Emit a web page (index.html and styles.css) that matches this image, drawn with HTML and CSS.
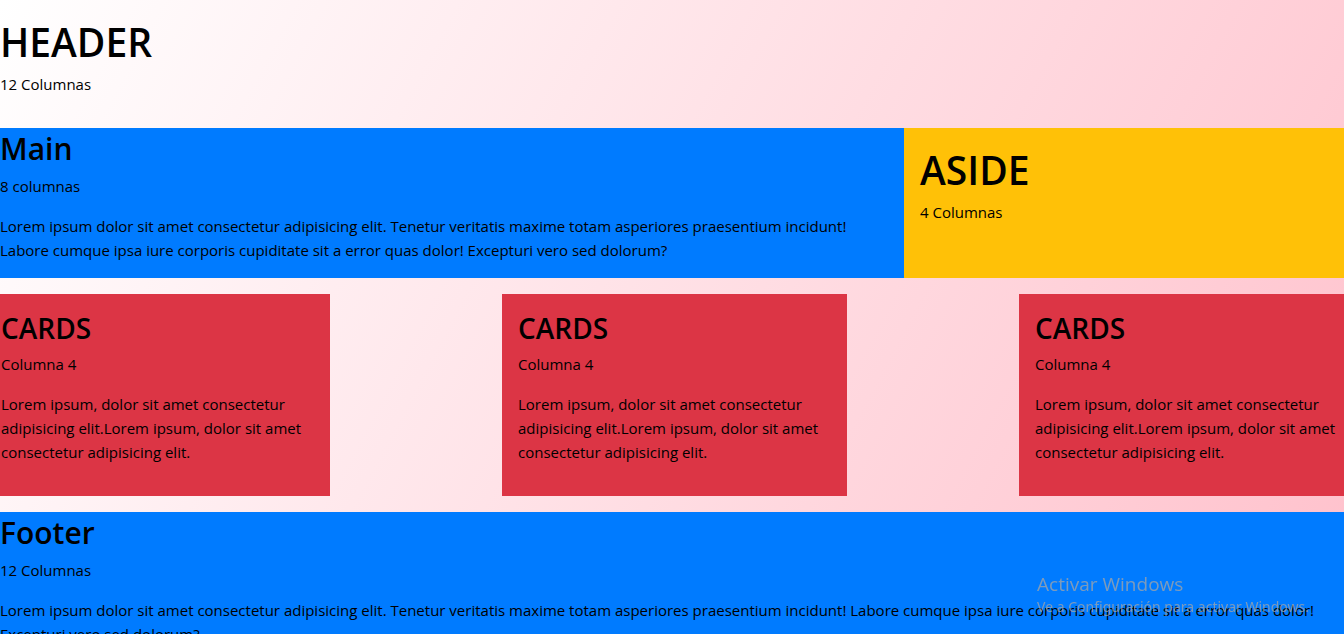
FILE: index.html
```html
<!DOCTYPE html>
<html lang="es">
<head>
<meta charset="utf-8">
<meta name="viewport" content="width=device-width, initial-scale=1">
<title>Grid de 12 columnas</title>
<link rel="stylesheet" href="styles.css">
</head>
<body>
<header class="header">
  <h1 class="title-xl">HEADER</h1>
  <p>12 Columnas</p>
</header>
<div class="content">
  <main class="main">
    <h2 class="title-lg">Main</h2>
    <p>8 columnas</p>
    <p>Lorem ipsum dolor sit amet consectetur adipisicing elit. Tenetur veritatis maxime totam asperiores praesentium incidunt! Labore cumque ipsa iure corporis cupiditate sit a error quas dolor! Excepturi vero sed dolorum?</p>
  </main>
  <aside class="aside">
    <h2 class="title-xl">ASIDE</h2>
    <p>4 Columnas</p>
  </aside>
</div>
<section class="cards">
  <article class="card card-first">
    <h3 class="title-md">CARDS</h3>
    <p>Columna 4</p>
    <p>Lorem ipsum, dolor sit amet consectetur adipisicing elit.Lorem ipsum, dolor sit amet consectetur adipisicing elit.</p>
  </article>
  <article class="card">
    <h3 class="title-md">CARDS</h3>
    <p>Columna 4</p>
    <p>Lorem ipsum, dolor sit amet consectetur adipisicing elit.Lorem ipsum, dolor sit amet consectetur adipisicing elit.</p>
  </article>
  <article class="card card-last">
    <h3 class="title-md">CARDS</h3>
    <p>Columna 4</p>
    <p>Lorem ipsum, dolor sit amet consectetur adipisicing elit.Lorem ipsum, dolor sit amet consectetur adipisicing elit.</p>
  </article>
</section>
<footer class="footer">
  <h2 class="title-lg">Footer</h2>
  <p>12 Columnas</p>
  <p>Lorem ipsum dolor sit amet consectetur adipisicing elit. Tenetur veritatis maxime totam asperiores praesentium incidunt! Labore cumque ipsa iure corporis cupiditate sit a error quas dolor! Excepturi vero sed dolorum?</p>
</footer>
<div class="watermark">
  <p class="watermark-title">Activar Windows</p>
  <p class="watermark-text">Ve a Configuración para activar Windows.</p>
</div>
</body>
</html>
```
FILE: styles.css
```css
* { box-sizing: border-box; }
html { scrollbar-width: none; }
body {
  margin: 0;
  min-height: 100vh;
  font: 15px/24px "Segoe UI", "Open Sans", "Noto Sans", sans-serif;
  color: #000;
  background: linear-gradient(118deg, #fff, pink);
}
h1, h2, h3 { margin: 0; font-weight: 600; }
p { margin: 0 0 16px; }
.title-xl { font-size: 39px; line-height: 52px; margin-bottom: 4px; }
.title-lg { font-size: 30px; line-height: 42px; margin-bottom: 4px; }
.title-md { font-size: 28px; line-height: 36px; margin-bottom: 6px; }
.header { padding: 16px 0; }
.content { display: grid; grid-template-columns: minmax(0, 904fr) minmax(0, 440fr); }
.main { background: #007bff; padding-right: 16px; }
.aside { background: #ffc107; padding: 16px; }
.cards {
  display: grid;
  grid-template-columns: 330fr 345fr 325fr;
  column-gap: 172px;
  padding: 16px 0;
}
.card { background: #dc3545; padding: 16px; }
.card-first { padding-left: 1px; }
.card-last { padding-right: 0; }
.footer { background: #007bff; padding-bottom: 1px; }
.watermark {
  position: fixed;
  right: 35px;
  bottom: 17px;
  color: rgba(165, 165, 165, 0.75);
}
.watermark p { margin: 0; }
.watermark-title { font-size: 19px; line-height: 26px; }
.watermark-text { font-family: "Noto Sans", sans-serif; font-size: 14px; line-height: 20px; }
```
